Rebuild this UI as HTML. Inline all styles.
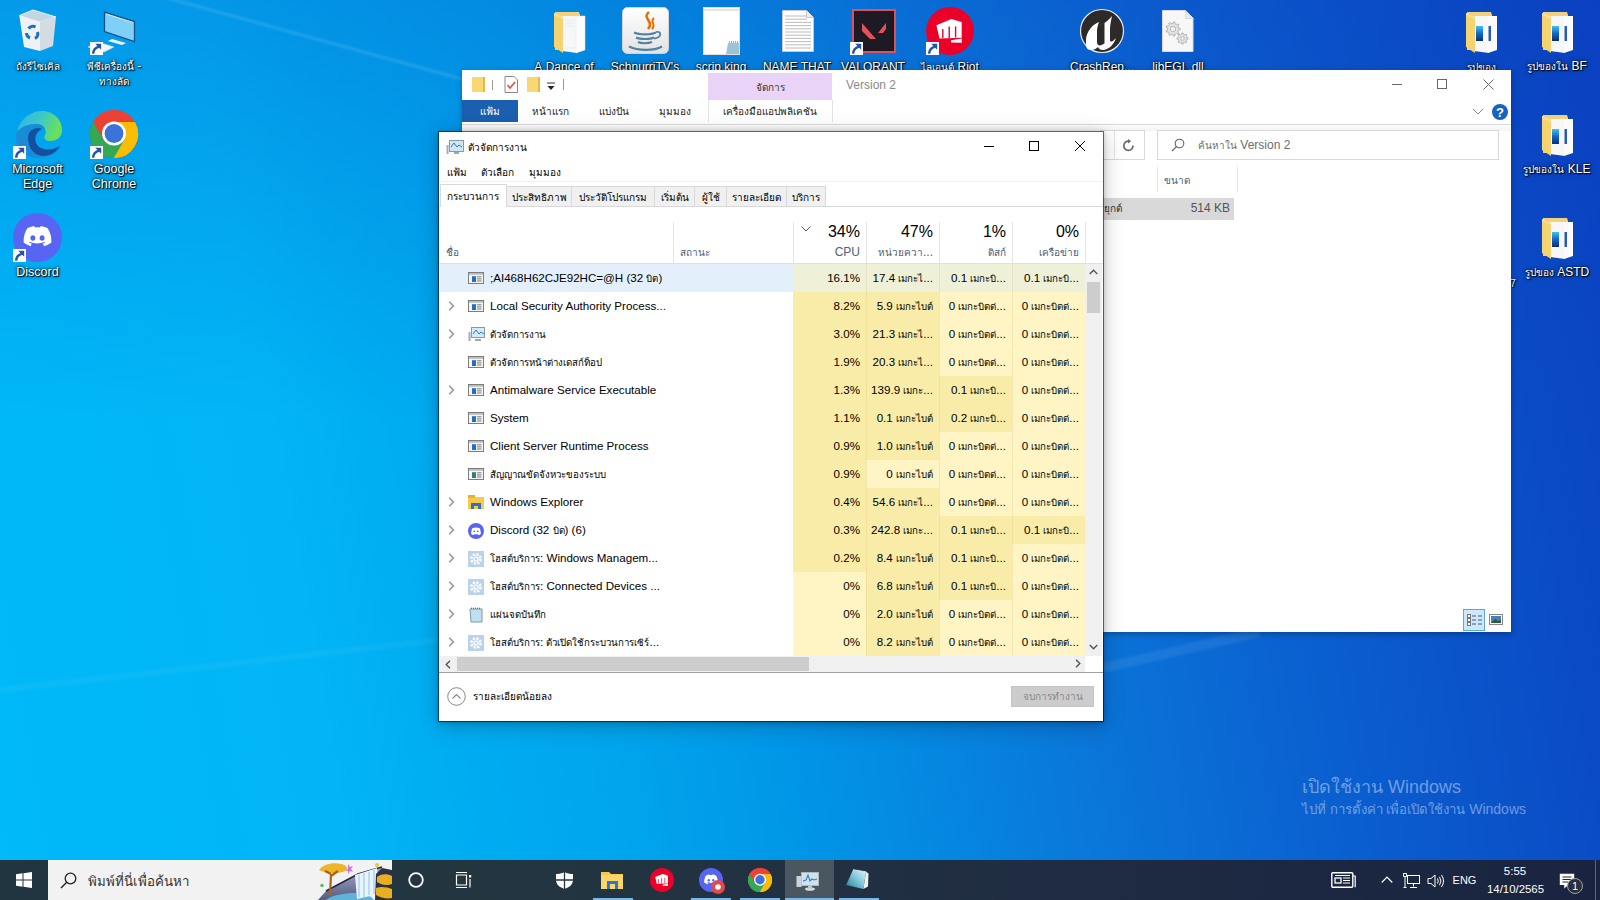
<!DOCTYPE html>
<html><head><meta charset="utf-8">
<style>
*{box-sizing:border-box;margin:0;padding:0}
html,body{width:1600px;height:900px;overflow:hidden}
body{position:relative;font-family:"Liberation Sans",sans-serif;font-size:12px;color:#000;background:#0a78dc}
.a{position:absolute;white-space:nowrap}
.t{font-size:0.833em}
svg.a{overflow:visible}
</style></head><body>
<div class="a" style="left:0px;top:0px;width:1600px;height:900px;background:linear-gradient(80deg,#00bafa 0%,#00b8f8 4%,#02b5f6 20%,#00aef2 26%,#00a4ed 37%,#0098e8 45%,#0a76d9 63.5%,#0a5ecf 78%,#0a4bc5 92%,#0a42c2 100%)"></div>
<div class="a" style="left:0px;top:0px;width:1600px;height:900px;background:linear-gradient(180deg,rgba(10,60,190,.24) 0px,rgba(10,60,190,.12) 200px,rgba(10,60,190,0) 420px)"></div>
<svg class="a" style="left:0px;top:0px;" width="1600" height="900" viewBox="0 0 1600 900"><defs><filter id="bl"><feGaussianBlur stdDeviation="1.2"/></filter></defs><path d="M160 -4L480 84" stroke="rgba(255,255,255,.12)" stroke-width="3" filter="url(#bl)"/><path d="M0 690L440 640" stroke="rgba(255,255,255,.045)" stroke-width="6" filter="url(#bl)"/><path d="M1103 668L1260 632" stroke="rgba(255,255,255,.07)" stroke-width="10" filter="url(#bl)"/></svg>
<svg class="a" style="left:14px;top:6px;" width="48" height="48" viewBox="0 0 48 48"><path d="M5.3 9.6L19 4l23 7-16 5z" fill="#c3d6e2" stroke="#eaf6fd" stroke-width="1"/><path d="M5.3 9.6L26 16v29l-16-4z" fill="#eef2f5"/><path d="M26 16l16-5-3 29-13 5z" fill="#d3dce3"/><path d="M14.5 22.5a5.5 5.5 0 0 1 7-1.5M23.5 26a5.5 5.5 0 0 1-2.5 6.5M16 32a5.5 5.5 0 0 1-3.5-5" fill="none" stroke="#1e6fc0" stroke-width="3"/></svg>
<div class="a" style="left:-22.5px;width:120px;text-align:center;top:57.0px;height:19px;line-height:19px;font-size:12px;color:#fff;text-shadow:0 0 2px rgba(0,0,0,.9),1px 1px 1px #000,0 0 4px rgba(0,0,0,.6)"><span class="t">ถังรีไซเคิล</span></div>
<svg class="a" style="left:86px;top:6px;" width="56" height="56" viewBox="0 0 56 56"><path d="M18.5 6.2L48.5 15.6v20L18.5 25.6z" fill="#7fd0f6" stroke="#1c4f86" stroke-width="1.3"/><path d="M20 8l27 8.5" stroke="#d8f2ff" stroke-width=".8"/><path d="M26 33l14 4-4 2-14-4z" fill="#eef2f5"/><path d="M12 36l16 5-10 5-16-5z" fill="#f2f4f6" stroke="#d8dde2" stroke-width=".5"/></svg>
<svg class="a" style="left:90px;top:42px;" width="13" height="13" viewBox="0 0 13 13"><rect x="0" y="0" width="13" height="13" fill="#fff"/><path d="M5.2 1.8h6v6z" fill="#2455a4"/><path d="M3.2 11.8c0-4 1.8-6 5.8-7.2" stroke="#2455a4" stroke-width="2.4" fill="none"/></svg>
<div class="a" style="left:54.0px;width:120px;text-align:center;top:57.0px;height:19px;line-height:19px;font-size:12px;color:#fff;text-shadow:0 0 2px rgba(0,0,0,.9),1px 1px 1px #000,0 0 4px rgba(0,0,0,.6)"><span class="t">พีซีเครื่องนี้</span> -</div>
<div class="a" style="left:54.0px;width:120px;text-align:center;top:72.0px;height:19px;line-height:19px;font-size:12px;color:#fff;text-shadow:0 0 2px rgba(0,0,0,.9),1px 1px 1px #000,0 0 4px rgba(0,0,0,.6)"><span class="t">ทางลัด</span></div>
<svg class="a" style="left:14px;top:110px;" width="48" height="48" viewBox="0 0 48 48"><defs><linearGradient id="eg1" x1="0" y1="0" x2="1" y2=".3"><stop offset="0" stop-color="#2fb4e8"/><stop offset=".55" stop-color="#3cc8c8"/><stop offset="1" stop-color="#6ae05a"/></linearGradient></defs><path d="M3 22C6 8 18 1 28 1c12 0 20 9 20 19 0 7-5 11-12 11-5 0-7-3-5-6 2-4-1-11-9-11C13 14 6 18 3 22z" fill="url(#eg1)"/><path d="M3 22c3-4 10-8 19-8 6 0 9 3 9 6-7-5-17 0-17 8 0 10 12 18 22 16 4-1 8-4 11-8-4 8-13 12-22 12C11 48 2 38 2 28c0-2 0-4 1-6z" fill="#1b8bd8"/><path d="M14 28c0-8 8-12 14-9-6 3-8 9-6 14 3 7 14 9 24 3-3 6-10 10-17 10-9 0-15-9-15-18z" fill="#14509e"/></svg>
<svg class="a" style="left:13px;top:146px;" width="13" height="13" viewBox="0 0 13 13"><rect x="0" y="0" width="13" height="13" fill="#fff"/><path d="M5.2 1.8h6v6z" fill="#2455a4"/><path d="M3.2 11.8c0-4 1.8-6 5.8-7.2" stroke="#2455a4" stroke-width="2.4" fill="none"/></svg>
<div class="a" style="left:-22.5px;width:120px;text-align:center;top:159.0px;height:20px;line-height:20px;font-size:12.5px;color:#fff;text-shadow:0 0 2px rgba(0,0,0,.9),1px 1px 1px #000,0 0 4px rgba(0,0,0,.6)">Microsoft</div>
<div class="a" style="left:-22.5px;width:120px;text-align:center;top:174.0px;height:20px;line-height:20px;font-size:12.5px;color:#fff;text-shadow:0 0 2px rgba(0,0,0,.9),1px 1px 1px #000,0 0 4px rgba(0,0,0,.6)">Edge</div>
<svg class="a" style="left:90px;top:110px;" width="48" height="48" viewBox="0 0 48 48"><g transform="scale(1.0)"><circle cx="24" cy="24" r="24" fill="#db4437"/>
<path d="M24 24L3.2 36A24 24 0 0 0 24 48z" fill="#0f9d58"/><path d="M24 24L3.2 36A24 24 0 0 1 3.2 12L13.6 30z" fill="#0f9d58"/>
<path d="M24 24H44.8A24 24 0 0 1 24 48z" fill="#ffcd40"/><path d="M24 24L44.8 12A24 24 0 0 1 44.8 36 24 24 0 0 1 24 48z" fill="#fbbc05"/>
<path d="M24 12h20.8A24 24 0 0 0 3.2 12L13.6 30A12 12 0 0 1 24 12z" fill="#ea4335"/>
<path d="M13.6 30L3.2 12A24 24 0 0 0 24 48L34.4 30z" fill="#34a853"/>
<path d="M34.4 30L24 48A24 24 0 0 0 44.8 12H24A12 12 0 0 1 34.4 30z" fill="#fbbc05"/>
<circle cx="24" cy="23.5" r="12" fill="#fff"/><circle cx="24" cy="23.5" r="9.4" fill="#3b73db"/></g></svg>
<svg class="a" style="left:90px;top:146px;" width="13" height="13" viewBox="0 0 13 13"><rect x="0" y="0" width="13" height="13" fill="#fff"/><path d="M5.2 1.8h6v6z" fill="#2455a4"/><path d="M3.2 11.8c0-4 1.8-6 5.8-7.2" stroke="#2455a4" stroke-width="2.4" fill="none"/></svg>
<div class="a" style="left:54.0px;width:120px;text-align:center;top:159.0px;height:20px;line-height:20px;font-size:12.5px;color:#fff;text-shadow:0 0 2px rgba(0,0,0,.9),1px 1px 1px #000,0 0 4px rgba(0,0,0,.6)">Google</div>
<div class="a" style="left:54.0px;width:120px;text-align:center;top:174.0px;height:20px;line-height:20px;font-size:12.5px;color:#fff;text-shadow:0 0 2px rgba(0,0,0,.9),1px 1px 1px #000,0 0 4px rgba(0,0,0,.6)">Chrome</div>
<svg class="a" style="left:13px;top:213px;" width="49" height="49" viewBox="0 0 49 49"><g transform="scale(1.0208333333333333)"><circle cx="24" cy="24" r="24" fill="#5865f2"/>
<path d="M14 15c3-1.5 5.5-2 7-2l.6 1.2c1.6-.3 3.2-.3 4.8 0L27 13c1.5 0 4 .5 7 2 2.5 4 3.8 8.5 3.6 14-2.4 1.8-4.8 2.9-7 3.5l-1.5-2.5c1-.4 1.8-.8 2.6-1.3l-.6-.5c-4.8 2.2-10 2.2-14.8 0l-.6.5c.8.5 1.6.9 2.6 1.3L17.4 32.5c-2.2-.6-4.6-1.7-7-3.5-.2-5.5 1.1-10 3.6-14z" fill="#fff"/>
<ellipse cx="19.5" cy="24.5" rx="2.4" ry="2.7" fill="#5865f2"/><ellipse cx="28.5" cy="24.5" rx="2.4" ry="2.7" fill="#5865f2"/></g></svg>
<svg class="a" style="left:13px;top:249px;" width="13" height="13" viewBox="0 0 13 13"><rect x="0" y="0" width="13" height="13" fill="#fff"/><path d="M5.2 1.8h6v6z" fill="#2455a4"/><path d="M3.2 11.8c0-4 1.8-6 5.8-7.2" stroke="#2455a4" stroke-width="2.4" fill="none"/></svg>
<div class="a" style="left:-22.5px;width:120px;text-align:center;top:262.0px;height:20px;line-height:20px;font-size:12.5px;color:#fff;text-shadow:0 0 2px rgba(0,0,0,.9),1px 1px 1px #000,0 0 4px rgba(0,0,0,.6)">Discord</div>
<svg class="a" style="left:554px;top:12px;" width="32" height="41" viewBox="0 0 32 41"><path d="M1 0h24l1 3v35H1z" fill="#f1d27a"/><path d="M8 4h15v37l-15-2z" fill="#f6f7f8"/><path d="M22 4h9v34l-9 3z" fill="#fbfcfc" stroke="#e2e6ea" stroke-width=".5"/><path d="M11 8h9M11 11h9M11 14h9M11 36h9" stroke="#e4e6ea" stroke-width=".6"/><path d="M0 1l9 4v36l-9-6z" fill="#f5d36e"/><path d="M0 1l9 4v2L0 3z" fill="#f8e09a"/></svg>
<div class="a" style="left:509.0px;width:120px;text-align:center;top:57.5px;height:19px;line-height:19px;font-size:12px;color:#fff;text-shadow:0 0 2px rgba(0,0,0,.9),1px 1px 1px #000,0 0 4px rgba(0,0,0,.6)">A.Dance.of...</div>
<svg class="a" style="left:622px;top:7px;" width="47" height="47" viewBox="0 0 47 47"><defs><linearGradient id="jv" x1="0" y1="0" x2="0" y2="1"><stop offset="0" stop-color="#ffffff"/><stop offset="1" stop-color="#e2e2e2"/></linearGradient></defs><rect x=".5" y=".5" width="46" height="46" rx="5" fill="url(#jv)" stroke="#d4d4d4"/><path d="M27 5c-8 6 6 9-1 17" stroke="#e76f00" stroke-width="2.6" fill="none"/><path d="M32 11c-5 4 3 6-2 11" stroke="#e76f00" stroke-width="1.9" fill="none"/><path d="M12 25.5c5 2.5 17 2.5 22 0" stroke="#5382a1" stroke-width="2.3" fill="none"/><path d="M14 30.5c4 2 14 2 18 0" stroke="#5382a1" stroke-width="2.2" fill="none"/><path d="M16 35c3 1.5 10 1.5 14 0" stroke="#5382a1" stroke-width="2" fill="none"/><path d="M34 25c6-1.5 6 5.5-2 6.5" stroke="#5382a1" stroke-width="1.8" fill="none"/><path d="M7 39.5c9 4.5 25 4.5 33 0" stroke="#5382a1" stroke-width="2.3" fill="none"/></svg>
<div class="a" style="left:585.0px;width:120px;text-align:center;top:57.5px;height:19px;line-height:19px;font-size:12px;color:#fff;text-shadow:0 0 2px rgba(0,0,0,.9),1px 1px 1px #000,0 0 4px rgba(0,0,0,.6)">SchnurriTV's</div>
<svg class="a" style="left:703px;top:7px;" width="38" height="48" viewBox="0 0 38 48"><rect x=".5" y=".5" width="36" height="47" fill="#fff" stroke="#e0e0e0"/><path d="M1 3h35" stroke="#ccc"/><path d="M25 36h11v11H23z" fill="#9cc4d8"/><path d="M26 35h10" stroke="#555" stroke-dasharray="1 1"/></svg>
<div class="a" style="left:661.0px;width:120px;text-align:center;top:57.5px;height:19px;line-height:19px;font-size:12px;color:#fff;text-shadow:0 0 2px rgba(0,0,0,.9),1px 1px 1px #000,0 0 4px rgba(0,0,0,.6)">scrip king</div>
<svg class="a" style="left:782px;top:10px;" width="32" height="42" viewBox="0 0 32 42"><path d="M.5 .5h24l7 7v34H.5z" fill="#fff" stroke="#c8c8c8"/><path d="M24.5 .5v7h7" fill="#eee" stroke="#c8c8c8"/><path d="M3 6.0h22" stroke="#aaa" stroke-width=".8"/><path d="M3 9.2h22" stroke="#aaa" stroke-width=".8"/><path d="M3 12.4h26" stroke="#aaa" stroke-width=".8"/><path d="M3 15.600000000000001h26" stroke="#aaa" stroke-width=".8"/><path d="M3 18.8h26" stroke="#aaa" stroke-width=".8"/><path d="M3 22.0h26" stroke="#aaa" stroke-width=".8"/><path d="M3 25.200000000000003h26" stroke="#aaa" stroke-width=".8"/><path d="M3 28.400000000000002h26" stroke="#aaa" stroke-width=".8"/><path d="M3 31.6h26" stroke="#aaa" stroke-width=".8"/><path d="M3 34.8h26" stroke="#aaa" stroke-width=".8"/><path d="M3 38.0h26" stroke="#aaa" stroke-width=".8"/></svg>
<div class="a" style="left:737.0px;width:120px;text-align:center;top:57.5px;height:19px;line-height:19px;font-size:12px;color:#fff;text-shadow:0 0 2px rgba(0,0,0,.9),1px 1px 1px #000,0 0 4px rgba(0,0,0,.6)">NAME THAT</div>
<svg class="a" style="left:852px;top:9px;" width="44" height="44" viewBox="0 0 44 44"><rect x="1" y="1" width="42" height="42" fill="#1d1a24" stroke="#d9535d" stroke-width="2"/><path d="M10 14l14 16h-6L10 22z" fill="#e5505d"/><path d="M34 14l-8 10h5l3-4z" fill="#e5505d"/></svg>
<svg class="a" style="left:850px;top:42px;" width="13" height="13" viewBox="0 0 13 13"><rect x="0" y="0" width="13" height="13" fill="#fff"/><path d="M5.2 1.8h6v6z" fill="#2455a4"/><path d="M3.2 11.8c0-4 1.8-6 5.8-7.2" stroke="#2455a4" stroke-width="2.4" fill="none"/></svg>
<div class="a" style="left:813.0px;width:120px;text-align:center;top:57.5px;height:19px;line-height:19px;font-size:12px;color:#fff;text-shadow:0 0 2px rgba(0,0,0,.9),1px 1px 1px #000,0 0 4px rgba(0,0,0,.6)">VALORANT</div>
<svg class="a" style="left:926px;top:7px;" width="48" height="48" viewBox="0 0 48 48"><circle cx="24" cy="24" r="24" fill="#eb0029"/><path d="M10.4 18.2L25.4 12 35.7 15V30.8L13.5 31.4z" fill="#fff"/><path d="M16.8 22v9M23.2 19.5v11.5M29.6 19.5v11" stroke="#eb0029" stroke-width="1.4"/><path d="M25 33.3L35.7 31.6v4.2L25 35.5z" fill="#fff"/></svg>
<svg class="a" style="left:926px;top:42px;" width="13" height="13" viewBox="0 0 13 13"><rect x="0" y="0" width="13" height="13" fill="#fff"/><path d="M5.2 1.8h6v6z" fill="#2455a4"/><path d="M3.2 11.8c0-4 1.8-6 5.8-7.2" stroke="#2455a4" stroke-width="2.4" fill="none"/></svg>
<div class="a" style="left:890.0px;width:120px;text-align:center;top:57.5px;height:19px;line-height:19px;font-size:12px;color:#fff;text-shadow:0 0 2px rgba(0,0,0,.9),1px 1px 1px #000,0 0 4px rgba(0,0,0,.6)"><span class="t">ไลเอนต์</span> Riot</div>
<svg class="a" style="left:1080px;top:9px;" width="44" height="44" viewBox="0 0 44 44"><circle cx="22" cy="22" r="21.5" fill="#2d2a28" stroke="#e6eef8" stroke-width="1.2"/><path d="M6 30c1-8 6-14 13-17-1 3-2 6-2 9v11c0 3 2 4 4 3V16c4-2 8-5 11-9-1 5-2 9-2 13v11c0 2 2 2 4 0l2-2c-2 7-8 12-13 12-3 0-4-1-5-3-2 2-4 3-7 3-4 0-5-3-5-6z" fill="#fff"/><path d="M20.5 16l4-2.5v21l-4 2z" fill="#2d2a28"/></svg>
<div class="a" style="left:1042.0px;width:120px;text-align:center;top:57.5px;height:19px;line-height:19px;font-size:12px;color:#fff;text-shadow:0 0 2px rgba(0,0,0,.9),1px 1px 1px #000,0 0 4px rgba(0,0,0,.6)">CrashRep...</div>
<svg class="a" style="left:1162px;top:10px;" width="32" height="42" viewBox="0 0 32 42"><path d="M.5 .5h23l7.5 7.5v33.5H.5z" fill="#f7f7f7" stroke="#dadada"/><path d="M23.5 .5v8h8" fill="#e8e8e8" stroke="#dadada"/><path d="M16.51 18.03 L18.16 18.25 L18.16 19.75 L16.51 19.97 L15.85 21.80 L16.97 23.03 L16.00 24.18 L14.60 23.29 L12.92 24.26 L12.98 25.92 L11.50 26.18 L11.00 24.60 L9.08 24.26 L8.07 25.58 L6.77 24.82 L7.40 23.29 L6.15 21.80 L4.53 22.16 L4.01 20.74 L5.49 19.97 L5.49 18.03 L4.01 17.26 L4.53 15.84 L6.15 16.20 L7.40 14.71 L6.77 13.18 L8.07 12.42 L9.08 13.74 L11.00 13.40 L11.50 11.82 L12.98 12.08 L12.92 13.74 L14.60 14.71 L16.00 13.82 L16.97 14.97 L15.85 16.20Z M13.60 19.00 A2.6 2.6 0 1 0 8.40 19.00 A2.6 2.6 0 1 0 13.60 19.00Z" fill="#e4e4e4" stroke="#a8a8a8" stroke-width=".8" fill-rule="evenodd"/><path d="M24.72 27.66 L26.06 27.84 L26.06 29.16 L24.72 29.34 L24.08 30.89 L24.90 31.97 L23.97 32.90 L22.89 32.08 L21.34 32.72 L21.16 34.06 L19.84 34.06 L19.66 32.72 L18.11 32.08 L17.03 32.90 L16.10 31.97 L16.92 30.89 L16.28 29.34 L14.94 29.16 L14.94 27.84 L16.28 27.66 L16.92 26.11 L16.10 25.03 L17.03 24.10 L18.11 24.92 L19.66 24.28 L19.84 22.94 L21.16 22.94 L21.34 24.28 L22.89 24.92 L23.97 24.10 L24.90 25.03 L24.08 26.11Z M22.30 28.50 A1.8 1.8 0 1 0 18.70 28.50 A1.8 1.8 0 1 0 22.30 28.50Z" fill="#e4e4e4" stroke="#a8a8a8" stroke-width=".8" fill-rule="evenodd"/></svg>
<div class="a" style="left:1118.0px;width:120px;text-align:center;top:57.5px;height:19px;line-height:19px;font-size:12px;color:#fff;text-shadow:0 0 2px rgba(0,0,0,.9),1px 1px 1px #000,0 0 4px rgba(0,0,0,.6)">libEGL.dll</div>
<svg class="a" style="left:1466px;top:12px;" width="32" height="41" viewBox="0 0 32 41"><defs><linearGradient id="ph" x1="0" y1="0" x2="0" y2="1"><stop offset="0" stop-color="#43c0f2"/><stop offset=".5" stop-color="#1167c9"/><stop offset="1" stop-color="#0b2f7a"/></linearGradient></defs><path d="M1 0h24l1 3v35H1z" fill="#f1d27a"/><path d="M8 4h15v37l-15-2z" fill="#f7f7f8"/><path d="M22 4h9v34l-9 3z" fill="#fbfbfc"/><rect x="10" y="14" width="7" height="15" fill="url(#ph)"/><rect x="22.5" y="14" width="2.5" height="15" fill="#2a5ab0"/><path d="M0 1l9 4v36l-9-6z" fill="#f5d36e"/><path d="M0 1l9 4v2L0 3z" fill="#f8e09a"/></svg>
<div class="a" style="left:1421.0px;width:120px;text-align:center;top:57.5px;height:19px;line-height:19px;font-size:12px;color:#fff;text-shadow:0 0 2px rgba(0,0,0,.9),1px 1px 1px #000,0 0 4px rgba(0,0,0,.6)"><span class="t">รูปของ</span></div>
<svg class="a" style="left:1542px;top:12px;" width="32" height="41" viewBox="0 0 32 41"><defs><linearGradient id="ph" x1="0" y1="0" x2="0" y2="1"><stop offset="0" stop-color="#43c0f2"/><stop offset=".5" stop-color="#1167c9"/><stop offset="1" stop-color="#0b2f7a"/></linearGradient></defs><path d="M1 0h24l1 3v35H1z" fill="#f1d27a"/><path d="M8 4h15v37l-15-2z" fill="#f7f7f8"/><path d="M22 4h9v34l-9 3z" fill="#fbfbfc"/><rect x="10" y="14" width="7" height="15" fill="url(#ph)"/><rect x="22.5" y="14" width="2.5" height="15" fill="#2a5ab0"/><path d="M0 1l9 4v36l-9-6z" fill="#f5d36e"/><path d="M0 1l9 4v2L0 3z" fill="#f8e09a"/></svg>
<div class="a" style="left:1497.0px;width:120px;text-align:center;top:56.5px;height:19px;line-height:19px;font-size:12px;color:#fff;text-shadow:0 0 2px rgba(0,0,0,.9),1px 1px 1px #000,0 0 4px rgba(0,0,0,.6)"><span class="t">รูปของใน</span> BF</div>
<svg class="a" style="left:1542px;top:115px;" width="32" height="41" viewBox="0 0 32 41"><defs><linearGradient id="ph" x1="0" y1="0" x2="0" y2="1"><stop offset="0" stop-color="#43c0f2"/><stop offset=".5" stop-color="#1167c9"/><stop offset="1" stop-color="#0b2f7a"/></linearGradient></defs><path d="M1 0h24l1 3v35H1z" fill="#f1d27a"/><path d="M8 4h15v37l-15-2z" fill="#f7f7f8"/><path d="M22 4h9v34l-9 3z" fill="#fbfbfc"/><rect x="10" y="14" width="7" height="15" fill="url(#ph)"/><rect x="22.5" y="14" width="2.5" height="15" fill="#2a5ab0"/><path d="M0 1l9 4v36l-9-6z" fill="#f5d36e"/><path d="M0 1l9 4v2L0 3z" fill="#f8e09a"/></svg>
<div class="a" style="left:1497.0px;width:120px;text-align:center;top:159.5px;height:19px;line-height:19px;font-size:12px;color:#fff;text-shadow:0 0 2px rgba(0,0,0,.9),1px 1px 1px #000,0 0 4px rgba(0,0,0,.6)"><span class="t">รูปของใน</span> KLE</div>
<svg class="a" style="left:1542px;top:218px;" width="32" height="41" viewBox="0 0 32 41"><defs><linearGradient id="ph" x1="0" y1="0" x2="0" y2="1"><stop offset="0" stop-color="#43c0f2"/><stop offset=".5" stop-color="#1167c9"/><stop offset="1" stop-color="#0b2f7a"/></linearGradient></defs><path d="M1 0h24l1 3v35H1z" fill="#f1d27a"/><path d="M8 4h15v37l-15-2z" fill="#f7f7f8"/><path d="M22 4h9v34l-9 3z" fill="#fbfbfc"/><rect x="10" y="14" width="7" height="15" fill="url(#ph)"/><rect x="22.5" y="14" width="2.5" height="15" fill="#2a5ab0"/><path d="M0 1l9 4v36l-9-6z" fill="#f5d36e"/><path d="M0 1l9 4v2L0 3z" fill="#f8e09a"/></svg>
<div class="a" style="left:1497.0px;width:120px;text-align:center;top:262.5px;height:19px;line-height:19px;font-size:12px;color:#fff;text-shadow:0 0 2px rgba(0,0,0,.9),1px 1px 1px #000,0 0 4px rgba(0,0,0,.6)"><span class="t">รูปของ</span> ASTD</div>
<div class="a" style="left:1503.5px;top:276.0px;height:16px;line-height:16px;font-size:10px;color:#fff;text-shadow:0 0 2px rgba(0,0,0,.9),1px 1px 1px #000">Y7</div>
<div class="a" style="left:462px;top:70px;width:1049px;height:562px;background:#fff;box-shadow:0 2px 6px rgba(0,0,0,.3)"></div>
<div class="a" style="left:472px;top:77px;width:13px;height:15px;background:#f8d775;border-right:2px solid #e4b94a"></div>
<div class="a" style="left:492px;top:80px;width:1px;height:10px;background:#999"></div>
<svg class="a" style="left:504px;top:76px;" width="14" height="17" viewBox="0 0 14 17"><path d="M1 .5h9l3.5 3.5v12.5h-12.5z" fill="#fff" stroke="#888"/><path d="M3.5 9l2.5 3 5-6" fill="none" stroke="#e04b3b" stroke-width="1.5"/></svg>
<div class="a" style="left:527px;top:77px;width:13px;height:15px;background:#f8d775;border-right:2px solid #e4b94a"></div>
<svg class="a" style="left:546px;top:82px;" width="10" height="8" viewBox="0 0 10 8"><path d="M1 1h8" stroke="#333"/><path d="M1.5 4h7l-3.5 4z" fill="#222"/></svg>
<div class="a" style="left:563px;top:79px;width:1px;height:11px;background:#999"></div>
<div class="a" style="left:708px;top:73px;width:124px;height:27px;background:#e9d3f7"></div>
<div class="a" style="left:710.0px;width:120px;text-align:center;top:77.5px;height:19px;line-height:19px;font-size:12px;color:#333;"><span class="t">จัดการ</span></div>
<div class="a" style="left:708px;top:100px;width:1px;height:22px;background:#e3e3e3"></div>
<div class="a" style="left:832px;top:100px;width:1px;height:22px;background:#e3e3e3"></div>
<div class="a" style="left:846px;top:75.5px;height:19px;line-height:19px;font-size:12px;color:#8a8a8a;">Version 2</div>
<div class="a" style="left:1392px;top:84px;width:10px;height:1px;background:#666"></div>
<div class="a" style="left:1437px;top:79px;width:10px;height:10px;border:1px solid #666"></div>
<svg class="a" style="left:1483px;top:79px;" width="11" height="11" viewBox="0 0 11 11"><path d="M.5 .5l10 10M10.5 .5l-10 10" stroke="#666" stroke-width="1"/></svg>
<div class="a" style="left:462px;top:100px;width:56px;height:22px;background:#1a5fb0"></div>
<div class="a" style="left:462.0px;width:56px;text-align:center;top:102.0px;height:19px;line-height:19px;font-size:12px;color:#fff;"><span class="t">แฟ้ม</span></div>
<div class="a" style="left:510.0px;width:80px;text-align:center;top:102.0px;height:19px;line-height:19px;font-size:12px;color:#222;"><span class="t">หน้าแรก</span></div>
<div class="a" style="left:574.0px;width:80px;text-align:center;top:102.0px;height:19px;line-height:19px;font-size:12px;color:#222;"><span class="t">แบ่งปัน</span></div>
<div class="a" style="left:635.0px;width:80px;text-align:center;top:102.0px;height:19px;line-height:19px;font-size:12px;color:#222;"><span class="t">มุมมอง</span></div>
<div class="a" style="left:708.0px;width:124px;text-align:center;top:102.0px;height:19px;line-height:19px;font-size:12px;color:#222;"><span class="t">เครื่องมือแอปพลิเคชัน</span></div>
<svg class="a" style="left:1472px;top:108px;" width="12" height="7" viewBox="0 0 12 7"><path d="M1 1l5 5 5-5" fill="none" stroke="#888"/></svg>
<svg class="a" style="left:1491px;top:103px;" width="18" height="18" viewBox="0 0 18 18"><circle cx="9" cy="9" r="8" fill="#1565c0"/><text x="9" y="14" font-size="13" font-weight="bold" fill="#fff" text-anchor="middle" font-family="Liberation Sans">?</text></svg>
<div class="a" style="left:462px;top:123px;width:1049px;height:8px;background:linear-gradient(#fff,#f3f3f3)"></div>
<div class="a" style="left:462px;top:124px;width:1049px;height:1px;background:#dadada"></div>
<div class="a" style="left:1100px;top:130px;width:45px;height:30px;border:1px solid #d9d9d9;background:#fff"></div>
<div class="a" style="left:1114px;top:131px;width:1px;height:28px;background:#e3e3e3"></div>
<svg class="a" style="left:1122px;top:139px;" width="14" height="14" viewBox="0 0 14 14"><path d="M11 6.5A4.6 4.6 0 1 1 7 2.2" fill="none" stroke="#666" stroke-width="1.6"/><path d="M6 0l3.2 2.3L6 4.6z" fill="#666"/></svg>
<div class="a" style="left:1157px;top:130px;width:342px;height:30px;border:1px solid #d9d9d9;background:#fff"></div>
<svg class="a" style="left:1171px;top:138px;" width="14" height="14" viewBox="0 0 14 14"><circle cx="8.5" cy="5.5" r="4.3" fill="none" stroke="#666" stroke-width="1.1"/><path d="M5.5 8.5L1 13" stroke="#666" stroke-width="1.1"/></svg>
<div class="a" style="left:1198px;top:135.5px;height:19px;line-height:19px;font-size:12px;color:#6d6d6d;"><span class="t">ค้นหาใน</span> Version 2</div>
<div class="a" style="left:1157px;top:167px;width:1px;height:25px;background:#e5e5e5"></div>
<div class="a" style="left:1237px;top:167px;width:1px;height:25px;background:#e5e5e5"></div>
<div class="a" style="left:1164px;top:170.5px;height:19px;line-height:19px;font-size:12px;color:#4c607a;"><span class="t">ขนาด</span></div>
<div class="a" style="left:1103px;top:198px;width:131px;height:22px;background:#d9d9d9"></div>
<div class="a" style="left:1104px;top:199.0px;height:19px;line-height:19px;font-size:12px;color:#333;"><span class="t">ยุกต์</span></div>
<div class="a" style="left:1150px;width:80px;text-align:right;top:199.0px;height:19px;line-height:19px;font-size:12px;color:#555;">514 KB</div>
<div class="a" style="left:1463px;top:609px;width:22px;height:22px;background:#cce8ff;border:1px solid #5fa8de"></div>
<svg class="a" style="left:1467px;top:614px;" width="15" height="12" viewBox="0 0 15 12"><rect x=".5" y=".5" width="3" height="3" fill="#fff" stroke="#777"/><rect x=".5" y="4.5" width="3" height="3" fill="#fff" stroke="#777"/><rect x=".5" y="8.5" width="3" height="3" fill="#fff" stroke="#777"/><path d="M5 2h4M11 2h4M5 6h4M11 6h4M5 10h4M11 10h4" stroke="#556"/></svg>
<svg class="a" style="left:1489px;top:614px;" width="14" height="11" viewBox="0 0 14 11"><rect x=".5" y=".5" width="13" height="10" fill="#fff" stroke="#888"/><rect x="2" y="2" width="10" height="7" fill="#4a7fb8"/><path d="M2 9l4-4 3 2 3-1v3z" fill="#2f5b3a"/></svg>
<div class="a" style="left:438px;top:131px;width:666px;height:591px;background:#fff;background-clip:padding-box;border:1px solid rgba(0,0,0,.55);box-shadow:0 4px 20px rgba(0,0,0,.22),0 1px 5px rgba(0,0,0,.2)"></div>
<svg class="a" style="left:446px;top:140px;" width="18" height="15" viewBox="0 0 18 15"><rect x="3.5" y=".5" width="14" height="11" fill="#cfe6f3" stroke="#8a9aa5"/><path d="M5 7l3-4 3 4 2-2 3 2" fill="none" stroke="#2b78c7"/><rect x="8" y="12" width="5" height="2" fill="#9aa"/><rect x=".5" y="5" width="2" height="9" fill="#aab"/></svg>
<div class="a" style="left:468px;top:138.0px;height:19px;line-height:19px;font-size:12px;color:#000;"><span class="t">ตัวจัดการงาน</span></div>
<div class="a" style="left:984px;top:146px;width:10px;height:1px;background:#000"></div>
<div class="a" style="left:1029px;top:141px;width:10px;height:10px;border:1px solid #000"></div>
<svg class="a" style="left:1075px;top:141px;" width="10" height="10" viewBox="0 0 10 10"><path d="M0 0l10 10M10 0L0 10" stroke="#000" stroke-width="1"/></svg>
<div class="a" style="left:447px;top:162.5px;height:19px;line-height:19px;font-size:12px;color:#000;"><span class="t">แฟ้ม</span></div>
<div class="a" style="left:481px;top:162.5px;height:19px;line-height:19px;font-size:12px;color:#000;"><span class="t">ตัวเลือก</span></div>
<div class="a" style="left:529px;top:162.5px;height:19px;line-height:19px;font-size:12px;color:#000;"><span class="t">มุมมอง</span></div>
<div class="a" style="left:439px;top:181px;width:664px;height:1px;background:#f0f0f0"></div>
<div class="a" style="left:439px;top:206px;width:664px;height:1px;background:#d9d9d9"></div>
<div class="a" style="left:506px;top:186px;width:66px;height:21px;background:#f0f0f0;border:1px solid #d9d9d9"></div>
<div class="a" style="left:506.5px;width:65px;text-align:center;top:187.5px;height:19px;line-height:19px;font-size:12px;color:#000;"><span class="t">ประสิทธิภาพ</span></div>
<div class="a" style="left:571px;top:186px;width:84px;height:21px;background:#f0f0f0;border:1px solid #d9d9d9"></div>
<div class="a" style="left:571.5px;width:83px;text-align:center;top:187.5px;height:19px;line-height:19px;font-size:12px;color:#000;"><span class="t">ประวัติโปรแกรม</span></div>
<div class="a" style="left:654px;top:186px;width:41px;height:21px;background:#f0f0f0;border:1px solid #d9d9d9"></div>
<div class="a" style="left:654.5px;width:40px;text-align:center;top:187.5px;height:19px;line-height:19px;font-size:12px;color:#000;"><span class="t">เริ่มต้น</span></div>
<div class="a" style="left:694px;top:186px;width:33px;height:21px;background:#f0f0f0;border:1px solid #d9d9d9"></div>
<div class="a" style="left:694.5px;width:32px;text-align:center;top:187.5px;height:19px;line-height:19px;font-size:12px;color:#000;"><span class="t">ผู้ใช้</span></div>
<div class="a" style="left:726px;top:186px;width:61px;height:21px;background:#f0f0f0;border:1px solid #d9d9d9"></div>
<div class="a" style="left:726.5px;width:60px;text-align:center;top:187.5px;height:19px;line-height:19px;font-size:12px;color:#000;"><span class="t">รายละเอียด</span></div>
<div class="a" style="left:786px;top:186px;width:40px;height:21px;background:#f0f0f0;border:1px solid #d9d9d9"></div>
<div class="a" style="left:786.5px;width:39px;text-align:center;top:187.5px;height:19px;line-height:19px;font-size:12px;color:#000;"><span class="t">บริการ</span></div>
<div class="a" style="left:440px;top:184px;width:67px;height:23px;background:#fff;border:1px solid #d9d9d9;border-bottom:none"></div>
<div class="a" style="left:440.0px;width:66px;text-align:center;top:186.5px;height:19px;line-height:19px;font-size:12px;color:#000;"><span class="t">กระบวนการ</span></div>
<div class="a" style="left:673px;top:222px;width:1px;height:41px;background:#e5e5e5"></div>
<div class="a" style="left:793px;top:222px;width:1px;height:41px;background:#e5e5e5"></div>
<div class="a" style="left:866px;top:222px;width:1px;height:41px;background:#e5e5e5"></div>
<div class="a" style="left:939px;top:222px;width:1px;height:41px;background:#e5e5e5"></div>
<div class="a" style="left:1012px;top:222px;width:1px;height:41px;background:#e5e5e5"></div>
<div class="a" style="left:1085px;top:222px;width:1px;height:41px;background:#e5e5e5"></div>
<div class="a" style="left:439px;top:263px;width:664px;height:1px;background:#e0e0e0"></div>
<div class="a" style="left:446px;top:242.5px;height:19px;line-height:19px;font-size:12px;color:#4c607a;"><span class="t">ชื่อ</span></div>
<div class="a" style="left:680px;top:242.5px;height:19px;line-height:19px;font-size:12px;color:#4c607a;"><span class="t">สถานะ</span></div>
<svg class="a" style="left:801px;top:226px;" width="10" height="6" viewBox="0 0 10 6"><path d="M.5 .5l4.5 4.5 4.5-4.5" fill="none" stroke="#555"/></svg>
<div class="a" style="left:790px;width:70px;text-align:right;top:219.0px;height:25px;line-height:25px;font-size:16px;color:#000;">34%</div>
<div class="a" style="left:790px;width:70px;text-align:right;top:242.5px;height:19px;line-height:19px;font-size:12px;color:#4c607a;">CPU</div>
<div class="a" style="left:863px;width:70px;text-align:right;top:219.0px;height:25px;line-height:25px;font-size:16px;color:#000;">47%</div>
<div class="a" style="left:863px;width:70px;text-align:right;top:242.5px;height:19px;line-height:19px;font-size:12px;color:#4c607a;"><span class="t">หน่วยควา</span>...</div>
<div class="a" style="left:936px;width:70px;text-align:right;top:219.0px;height:25px;line-height:25px;font-size:16px;color:#000;">1%</div>
<div class="a" style="left:936px;width:70px;text-align:right;top:242.5px;height:19px;line-height:19px;font-size:12px;color:#4c607a;"><span class="t">ดิสก์</span></div>
<div class="a" style="left:1009px;width:70px;text-align:right;top:219.0px;height:25px;line-height:25px;font-size:16px;color:#000;">0%</div>
<div class="a" style="left:1009px;width:70px;text-align:right;top:242.5px;height:19px;line-height:19px;font-size:12px;color:#4c607a;"><span class="t">เครือข่าย</span></div>
<div class="a" style="left:440px;top:264px;width:353px;height:28px;background:#e3f0fb"></div>
<div class="a" style="left:793px;top:264px;width:73px;height:28px;background:#eef0d8"></div>
<div class="a" style="left:866px;top:264px;width:73px;height:28px;background:#eef0d8"></div>
<div class="a" style="left:939px;top:264px;width:73px;height:28px;background:#eef0d8"></div>
<div class="a" style="left:1012px;top:264px;width:73px;height:28px;background:#eef0d8"></div>
<div class="a" style="left:866px;top:264px;width:1px;height:28px;background:rgba(200,180,100,.18)"></div>
<div class="a" style="left:939px;top:264px;width:1px;height:28px;background:rgba(200,180,100,.18)"></div>
<div class="a" style="left:1012px;top:264px;width:1px;height:28px;background:rgba(200,180,100,.18)"></div>
<svg class="a" style="left:468px;top:272px;" width="17" height="13" viewBox="0 0 17 13"><rect x=".5" y=".5" width="15" height="11" fill="#f6f6f6" stroke="#7d7d7d"/><rect x="1" y="1" width="14" height="1.8" fill="#bdbdbd"/><rect x="4" y="4.2" width="4" height="5.8" fill="#1e6fc9"/><path d="M9 4.8h4.5M9 6.9h4.5M9 9h4.5" stroke="#6a6a6a" stroke-width=".9"/></svg>
<div class="a" style="left:490px;top:269.0px;height:18px;line-height:18px;font-size:11.6px;color:#000;">;AI468H62CJE92HC=@H (32 <span class="t">บิต</span>)</div>
<div class="a" style="left:790px;width:70px;text-align:right;top:269.0px;height:18px;line-height:18px;font-size:11.6px;color:#000;">16.1%</div>
<div class="a" style="left:861px;width:72px;text-align:right;top:269.0px;height:18px;line-height:18px;font-size:11.6px;color:#000;">17.4 <span class="t">เมกะไ</span>...</div>
<div class="a" style="left:934px;width:72px;text-align:right;top:269.0px;height:18px;line-height:18px;font-size:11.6px;color:#000;">0.1 <span class="t">เมกะบิ</span>...</div>
<div class="a" style="left:1007px;width:72px;text-align:right;top:269.0px;height:18px;line-height:18px;font-size:11.6px;color:#000;">0.1 <span class="t">เมกะบิ</span>...</div>
<div class="a" style="left:793px;top:292px;width:73px;height:28px;background:#f9eca8"></div>
<div class="a" style="left:866px;top:292px;width:73px;height:28px;background:#f9eca8"></div>
<div class="a" style="left:939px;top:292px;width:73px;height:28px;background:#fff4c4"></div>
<div class="a" style="left:1012px;top:292px;width:73px;height:28px;background:#fff4c4"></div>
<div class="a" style="left:866px;top:292px;width:1px;height:28px;background:rgba(200,180,100,.18)"></div>
<div class="a" style="left:939px;top:292px;width:1px;height:28px;background:rgba(200,180,100,.18)"></div>
<div class="a" style="left:1012px;top:292px;width:1px;height:28px;background:rgba(200,180,100,.18)"></div>
<svg class="a" style="left:448px;top:301px;" width="7" height="10" viewBox="0 0 7 10"><path d="M1.2 .8l4.2 4.2-4.2 4.2" fill="none" stroke="#999" stroke-width="1.6"/></svg>
<svg class="a" style="left:468px;top:300px;" width="17" height="13" viewBox="0 0 17 13"><rect x=".5" y=".5" width="15" height="11" fill="#f6f6f6" stroke="#7d7d7d"/><rect x="1" y="1" width="14" height="1.8" fill="#bdbdbd"/><rect x="4" y="4.2" width="4" height="5.8" fill="#1e6fc9"/><path d="M9 4.8h4.5M9 6.9h4.5M9 9h4.5" stroke="#6a6a6a" stroke-width=".9"/></svg>
<div class="a" style="left:490px;top:297.0px;height:18px;line-height:18px;font-size:11.6px;color:#000;">Local Security Authority Process...</div>
<div class="a" style="left:790px;width:70px;text-align:right;top:297.0px;height:18px;line-height:18px;font-size:11.6px;color:#000;">8.2%</div>
<div class="a" style="left:861px;width:72px;text-align:right;top:297.0px;height:18px;line-height:18px;font-size:11.6px;color:#000;">5.9 <span class="t">เมกะไบต์</span></div>
<div class="a" style="left:934px;width:72px;text-align:right;top:297.0px;height:18px;line-height:18px;font-size:11.6px;color:#000;">0 <span class="t">เมกะบิตต่</span>...</div>
<div class="a" style="left:1007px;width:72px;text-align:right;top:297.0px;height:18px;line-height:18px;font-size:11.6px;color:#000;">0 <span class="t">เมกะบิตต่</span>...</div>
<div class="a" style="left:793px;top:320px;width:73px;height:28px;background:#f9eca8"></div>
<div class="a" style="left:866px;top:320px;width:73px;height:28px;background:#f9eca8"></div>
<div class="a" style="left:939px;top:320px;width:73px;height:28px;background:#fff4c4"></div>
<div class="a" style="left:1012px;top:320px;width:73px;height:28px;background:#fff4c4"></div>
<div class="a" style="left:866px;top:320px;width:1px;height:28px;background:rgba(200,180,100,.18)"></div>
<div class="a" style="left:939px;top:320px;width:1px;height:28px;background:rgba(200,180,100,.18)"></div>
<div class="a" style="left:1012px;top:320px;width:1px;height:28px;background:rgba(200,180,100,.18)"></div>
<svg class="a" style="left:448px;top:329px;" width="7" height="10" viewBox="0 0 7 10"><path d="M1.2 .8l4.2 4.2-4.2 4.2" fill="none" stroke="#999" stroke-width="1.6"/></svg>
<svg class="a" style="left:468px;top:327px;" width="17" height="15" viewBox="0 0 17 15"><rect x="3.5" y=".5" width="13" height="10" fill="#d6eaf5" stroke="#8a9aa5"/><path d="M5 7l3-4 3 4 2-2 3 2" fill="none" stroke="#2b78c7"/><rect x="7" y="12" width="6" height="2" fill="#9aa"/><rect x=".5" y="5" width="2" height="9" fill="#aab"/></svg>
<div class="a" style="left:490px;top:325.0px;height:18px;line-height:18px;font-size:11.6px;color:#000;"><span class="t">ตัวจัดการงาน</span></div>
<div class="a" style="left:790px;width:70px;text-align:right;top:325.0px;height:18px;line-height:18px;font-size:11.6px;color:#000;">3.0%</div>
<div class="a" style="left:861px;width:72px;text-align:right;top:325.0px;height:18px;line-height:18px;font-size:11.6px;color:#000;">21.3 <span class="t">เมกะไ</span>...</div>
<div class="a" style="left:934px;width:72px;text-align:right;top:325.0px;height:18px;line-height:18px;font-size:11.6px;color:#000;">0 <span class="t">เมกะบิตต่</span>...</div>
<div class="a" style="left:1007px;width:72px;text-align:right;top:325.0px;height:18px;line-height:18px;font-size:11.6px;color:#000;">0 <span class="t">เมกะบิตต่</span>...</div>
<div class="a" style="left:793px;top:348px;width:73px;height:28px;background:#f9eca8"></div>
<div class="a" style="left:866px;top:348px;width:73px;height:28px;background:#f9eca8"></div>
<div class="a" style="left:939px;top:348px;width:73px;height:28px;background:#fff4c4"></div>
<div class="a" style="left:1012px;top:348px;width:73px;height:28px;background:#fff4c4"></div>
<div class="a" style="left:866px;top:348px;width:1px;height:28px;background:rgba(200,180,100,.18)"></div>
<div class="a" style="left:939px;top:348px;width:1px;height:28px;background:rgba(200,180,100,.18)"></div>
<div class="a" style="left:1012px;top:348px;width:1px;height:28px;background:rgba(200,180,100,.18)"></div>
<svg class="a" style="left:468px;top:356px;" width="17" height="13" viewBox="0 0 17 13"><rect x=".5" y=".5" width="15" height="11" fill="#f6f6f6" stroke="#7d7d7d"/><rect x="1" y="1" width="14" height="1.8" fill="#bdbdbd"/><rect x="4" y="4.2" width="4" height="5.8" fill="#1e6fc9"/><path d="M9 4.8h4.5M9 6.9h4.5M9 9h4.5" stroke="#6a6a6a" stroke-width=".9"/></svg>
<div class="a" style="left:490px;top:353.0px;height:18px;line-height:18px;font-size:11.6px;color:#000;"><span class="t">ตัวจัดการหน้าต่างเดสก์ท็อป</span></div>
<div class="a" style="left:790px;width:70px;text-align:right;top:353.0px;height:18px;line-height:18px;font-size:11.6px;color:#000;">1.9%</div>
<div class="a" style="left:861px;width:72px;text-align:right;top:353.0px;height:18px;line-height:18px;font-size:11.6px;color:#000;">20.3 <span class="t">เมกะไ</span>...</div>
<div class="a" style="left:934px;width:72px;text-align:right;top:353.0px;height:18px;line-height:18px;font-size:11.6px;color:#000;">0 <span class="t">เมกะบิตต่</span>...</div>
<div class="a" style="left:1007px;width:72px;text-align:right;top:353.0px;height:18px;line-height:18px;font-size:11.6px;color:#000;">0 <span class="t">เมกะบิตต่</span>...</div>
<div class="a" style="left:793px;top:376px;width:73px;height:28px;background:#f9eca8"></div>
<div class="a" style="left:866px;top:376px;width:73px;height:28px;background:#f9eca8"></div>
<div class="a" style="left:939px;top:376px;width:73px;height:28px;background:#f9eca8"></div>
<div class="a" style="left:1012px;top:376px;width:73px;height:28px;background:#fff4c4"></div>
<div class="a" style="left:866px;top:376px;width:1px;height:28px;background:rgba(200,180,100,.18)"></div>
<div class="a" style="left:939px;top:376px;width:1px;height:28px;background:rgba(200,180,100,.18)"></div>
<div class="a" style="left:1012px;top:376px;width:1px;height:28px;background:rgba(200,180,100,.18)"></div>
<svg class="a" style="left:448px;top:385px;" width="7" height="10" viewBox="0 0 7 10"><path d="M1.2 .8l4.2 4.2-4.2 4.2" fill="none" stroke="#999" stroke-width="1.6"/></svg>
<svg class="a" style="left:468px;top:384px;" width="17" height="13" viewBox="0 0 17 13"><rect x=".5" y=".5" width="15" height="11" fill="#f6f6f6" stroke="#7d7d7d"/><rect x="1" y="1" width="14" height="1.8" fill="#bdbdbd"/><rect x="4" y="4.2" width="4" height="5.8" fill="#1e6fc9"/><path d="M9 4.8h4.5M9 6.9h4.5M9 9h4.5" stroke="#6a6a6a" stroke-width=".9"/></svg>
<div class="a" style="left:490px;top:381.0px;height:18px;line-height:18px;font-size:11.6px;color:#000;">Antimalware Service Executable</div>
<div class="a" style="left:790px;width:70px;text-align:right;top:381.0px;height:18px;line-height:18px;font-size:11.6px;color:#000;">1.3%</div>
<div class="a" style="left:861px;width:72px;text-align:right;top:381.0px;height:18px;line-height:18px;font-size:11.6px;color:#000;">139.9 <span class="t">เมกะ</span>...</div>
<div class="a" style="left:934px;width:72px;text-align:right;top:381.0px;height:18px;line-height:18px;font-size:11.6px;color:#000;">0.1 <span class="t">เมกะบิ</span>...</div>
<div class="a" style="left:1007px;width:72px;text-align:right;top:381.0px;height:18px;line-height:18px;font-size:11.6px;color:#000;">0 <span class="t">เมกะบิตต่</span>...</div>
<div class="a" style="left:793px;top:404px;width:73px;height:28px;background:#f9eca8"></div>
<div class="a" style="left:866px;top:404px;width:73px;height:28px;background:#f9eca8"></div>
<div class="a" style="left:939px;top:404px;width:73px;height:28px;background:#f9eca8"></div>
<div class="a" style="left:1012px;top:404px;width:73px;height:28px;background:#fff4c4"></div>
<div class="a" style="left:866px;top:404px;width:1px;height:28px;background:rgba(200,180,100,.18)"></div>
<div class="a" style="left:939px;top:404px;width:1px;height:28px;background:rgba(200,180,100,.18)"></div>
<div class="a" style="left:1012px;top:404px;width:1px;height:28px;background:rgba(200,180,100,.18)"></div>
<svg class="a" style="left:468px;top:412px;" width="17" height="13" viewBox="0 0 17 13"><rect x=".5" y=".5" width="15" height="11" fill="#f6f6f6" stroke="#7d7d7d"/><rect x="1" y="1" width="14" height="1.8" fill="#bdbdbd"/><rect x="4" y="4.2" width="4" height="5.8" fill="#1e6fc9"/><path d="M9 4.8h4.5M9 6.9h4.5M9 9h4.5" stroke="#6a6a6a" stroke-width=".9"/></svg>
<div class="a" style="left:490px;top:409.0px;height:18px;line-height:18px;font-size:11.6px;color:#000;">System</div>
<div class="a" style="left:790px;width:70px;text-align:right;top:409.0px;height:18px;line-height:18px;font-size:11.6px;color:#000;">1.1%</div>
<div class="a" style="left:861px;width:72px;text-align:right;top:409.0px;height:18px;line-height:18px;font-size:11.6px;color:#000;">0.1 <span class="t">เมกะไบต์</span></div>
<div class="a" style="left:934px;width:72px;text-align:right;top:409.0px;height:18px;line-height:18px;font-size:11.6px;color:#000;">0.2 <span class="t">เมกะบิ</span>...</div>
<div class="a" style="left:1007px;width:72px;text-align:right;top:409.0px;height:18px;line-height:18px;font-size:11.6px;color:#000;">0 <span class="t">เมกะบิตต่</span>...</div>
<div class="a" style="left:793px;top:432px;width:73px;height:28px;background:#f9eca8"></div>
<div class="a" style="left:866px;top:432px;width:73px;height:28px;background:#f9eca8"></div>
<div class="a" style="left:939px;top:432px;width:73px;height:28px;background:#fff4c4"></div>
<div class="a" style="left:1012px;top:432px;width:73px;height:28px;background:#fff4c4"></div>
<div class="a" style="left:866px;top:432px;width:1px;height:28px;background:rgba(200,180,100,.18)"></div>
<div class="a" style="left:939px;top:432px;width:1px;height:28px;background:rgba(200,180,100,.18)"></div>
<div class="a" style="left:1012px;top:432px;width:1px;height:28px;background:rgba(200,180,100,.18)"></div>
<svg class="a" style="left:468px;top:440px;" width="17" height="13" viewBox="0 0 17 13"><rect x=".5" y=".5" width="15" height="11" fill="#f6f6f6" stroke="#7d7d7d"/><rect x="1" y="1" width="14" height="1.8" fill="#bdbdbd"/><rect x="4" y="4.2" width="4" height="5.8" fill="#1e6fc9"/><path d="M9 4.8h4.5M9 6.9h4.5M9 9h4.5" stroke="#6a6a6a" stroke-width=".9"/></svg>
<div class="a" style="left:490px;top:437.0px;height:18px;line-height:18px;font-size:11.6px;color:#000;">Client Server Runtime Process</div>
<div class="a" style="left:790px;width:70px;text-align:right;top:437.0px;height:18px;line-height:18px;font-size:11.6px;color:#000;">0.9%</div>
<div class="a" style="left:861px;width:72px;text-align:right;top:437.0px;height:18px;line-height:18px;font-size:11.6px;color:#000;">1.0 <span class="t">เมกะไบต์</span></div>
<div class="a" style="left:934px;width:72px;text-align:right;top:437.0px;height:18px;line-height:18px;font-size:11.6px;color:#000;">0 <span class="t">เมกะบิตต่</span>...</div>
<div class="a" style="left:1007px;width:72px;text-align:right;top:437.0px;height:18px;line-height:18px;font-size:11.6px;color:#000;">0 <span class="t">เมกะบิตต่</span>...</div>
<div class="a" style="left:793px;top:460px;width:73px;height:28px;background:#f9eca8"></div>
<div class="a" style="left:866px;top:460px;width:73px;height:28px;background:#fff4c4"></div>
<div class="a" style="left:939px;top:460px;width:73px;height:28px;background:#fff4c4"></div>
<div class="a" style="left:1012px;top:460px;width:73px;height:28px;background:#fff4c4"></div>
<div class="a" style="left:866px;top:460px;width:1px;height:28px;background:rgba(200,180,100,.18)"></div>
<div class="a" style="left:939px;top:460px;width:1px;height:28px;background:rgba(200,180,100,.18)"></div>
<div class="a" style="left:1012px;top:460px;width:1px;height:28px;background:rgba(200,180,100,.18)"></div>
<svg class="a" style="left:468px;top:468px;" width="17" height="13" viewBox="0 0 17 13"><rect x=".5" y=".5" width="15" height="11" fill="#f6f6f6" stroke="#7d7d7d"/><rect x="1" y="1" width="14" height="1.8" fill="#bdbdbd"/><rect x="4" y="4.2" width="4" height="5.8" fill="#2d7f80"/><path d="M9 4.8h4.5M9 6.9h4.5M9 9h4.5" stroke="#6a6a6a" stroke-width=".9"/></svg>
<div class="a" style="left:490px;top:465.0px;height:18px;line-height:18px;font-size:11.6px;color:#000;"><span class="t">สัญญาณขัดจังหวะของระบบ</span></div>
<div class="a" style="left:790px;width:70px;text-align:right;top:465.0px;height:18px;line-height:18px;font-size:11.6px;color:#000;">0.9%</div>
<div class="a" style="left:861px;width:72px;text-align:right;top:465.0px;height:18px;line-height:18px;font-size:11.6px;color:#000;">0 <span class="t">เมกะไบต์</span></div>
<div class="a" style="left:934px;width:72px;text-align:right;top:465.0px;height:18px;line-height:18px;font-size:11.6px;color:#000;">0 <span class="t">เมกะบิตต่</span>...</div>
<div class="a" style="left:1007px;width:72px;text-align:right;top:465.0px;height:18px;line-height:18px;font-size:11.6px;color:#000;">0 <span class="t">เมกะบิตต่</span>...</div>
<div class="a" style="left:793px;top:488px;width:73px;height:28px;background:#f9eca8"></div>
<div class="a" style="left:866px;top:488px;width:73px;height:28px;background:#f9eca8"></div>
<div class="a" style="left:939px;top:488px;width:73px;height:28px;background:#fff4c4"></div>
<div class="a" style="left:1012px;top:488px;width:73px;height:28px;background:#fff4c4"></div>
<div class="a" style="left:866px;top:488px;width:1px;height:28px;background:rgba(200,180,100,.18)"></div>
<div class="a" style="left:939px;top:488px;width:1px;height:28px;background:rgba(200,180,100,.18)"></div>
<div class="a" style="left:1012px;top:488px;width:1px;height:28px;background:rgba(200,180,100,.18)"></div>
<svg class="a" style="left:448px;top:497px;" width="7" height="10" viewBox="0 0 7 10"><path d="M1.2 .8l4.2 4.2-4.2 4.2" fill="none" stroke="#999" stroke-width="1.6"/></svg>
<svg class="a" style="left:468px;top:495px;" width="16" height="15" viewBox="0 0 16 15"><rect x="0" y="2" width="16" height="12" fill="#f8c94a"/><rect x="0" y="0" width="7" height="3" fill="#e8b030"/><rect x="3" y="8" width="10" height="6" fill="#2a6fc9"/><rect x="6" y="11" width="4" height="3" fill="#f8c94a"/></svg>
<div class="a" style="left:490px;top:493.0px;height:18px;line-height:18px;font-size:11.6px;color:#000;">Windows Explorer</div>
<div class="a" style="left:790px;width:70px;text-align:right;top:493.0px;height:18px;line-height:18px;font-size:11.6px;color:#000;">0.4%</div>
<div class="a" style="left:861px;width:72px;text-align:right;top:493.0px;height:18px;line-height:18px;font-size:11.6px;color:#000;">54.6 <span class="t">เมกะไ</span>...</div>
<div class="a" style="left:934px;width:72px;text-align:right;top:493.0px;height:18px;line-height:18px;font-size:11.6px;color:#000;">0 <span class="t">เมกะบิตต่</span>...</div>
<div class="a" style="left:1007px;width:72px;text-align:right;top:493.0px;height:18px;line-height:18px;font-size:11.6px;color:#000;">0 <span class="t">เมกะบิตต่</span>...</div>
<div class="a" style="left:793px;top:516px;width:73px;height:28px;background:#f9eca8"></div>
<div class="a" style="left:866px;top:516px;width:73px;height:28px;background:#f9eca8"></div>
<div class="a" style="left:939px;top:516px;width:73px;height:28px;background:#f9eca8"></div>
<div class="a" style="left:1012px;top:516px;width:73px;height:28px;background:#f9eca8"></div>
<div class="a" style="left:866px;top:516px;width:1px;height:28px;background:rgba(200,180,100,.18)"></div>
<div class="a" style="left:939px;top:516px;width:1px;height:28px;background:rgba(200,180,100,.18)"></div>
<div class="a" style="left:1012px;top:516px;width:1px;height:28px;background:rgba(200,180,100,.18)"></div>
<svg class="a" style="left:448px;top:525px;" width="7" height="10" viewBox="0 0 7 10"><path d="M1.2 .8l4.2 4.2-4.2 4.2" fill="none" stroke="#999" stroke-width="1.6"/></svg>
<svg class="a" style="left:468px;top:523px;" width="16" height="16" viewBox="0 0 16 16"><circle cx="8" cy="8" r="8" fill="#5865f2"/><path d="M4 5.5q4-2 8 0l1 5q-1 1.5-3 1.5l-.6-1q-1.4.5-2.8 0l-.6 1q-2 0-3-1.5z" fill="#fff"/><circle cx="6.3" cy="8.3" r=".9" fill="#5865f2"/><circle cx="9.7" cy="8.3" r=".9" fill="#5865f2"/></svg>
<div class="a" style="left:490px;top:521.0px;height:18px;line-height:18px;font-size:11.6px;color:#000;">Discord (32 <span class="t">บิต</span>) (6)</div>
<div class="a" style="left:790px;width:70px;text-align:right;top:521.0px;height:18px;line-height:18px;font-size:11.6px;color:#000;">0.3%</div>
<div class="a" style="left:861px;width:72px;text-align:right;top:521.0px;height:18px;line-height:18px;font-size:11.6px;color:#000;">242.8 <span class="t">เมกะ</span>...</div>
<div class="a" style="left:934px;width:72px;text-align:right;top:521.0px;height:18px;line-height:18px;font-size:11.6px;color:#000;">0.1 <span class="t">เมกะบิ</span>...</div>
<div class="a" style="left:1007px;width:72px;text-align:right;top:521.0px;height:18px;line-height:18px;font-size:11.6px;color:#000;">0.1 <span class="t">เมกะบิ</span>...</div>
<div class="a" style="left:793px;top:544px;width:73px;height:28px;background:#f9eca8"></div>
<div class="a" style="left:866px;top:544px;width:73px;height:28px;background:#f9eca8"></div>
<div class="a" style="left:939px;top:544px;width:73px;height:28px;background:#f9eca8"></div>
<div class="a" style="left:1012px;top:544px;width:73px;height:28px;background:#fff4c4"></div>
<div class="a" style="left:866px;top:544px;width:1px;height:28px;background:rgba(200,180,100,.18)"></div>
<div class="a" style="left:939px;top:544px;width:1px;height:28px;background:rgba(200,180,100,.18)"></div>
<div class="a" style="left:1012px;top:544px;width:1px;height:28px;background:rgba(200,180,100,.18)"></div>
<svg class="a" style="left:448px;top:553px;" width="7" height="10" viewBox="0 0 7 10"><path d="M1.2 .8l4.2 4.2-4.2 4.2" fill="none" stroke="#999" stroke-width="1.6"/></svg>
<svg class="a" style="left:468px;top:551px;" width="16" height="16" viewBox="0 0 16 16"><rect x="0" y="0" width="16" height="16" fill="#b9d3ec"/><circle cx="8" cy="8" r="4.5" fill="none" stroke="#fff" stroke-width="2.6" stroke-dasharray="2.2 1.3"/><circle cx="8" cy="8" r="2.6" fill="#fff"/><circle cx="8" cy="8" r="1.3" fill="#b9d3ec"/></svg>
<div class="a" style="left:490px;top:549.0px;height:18px;line-height:18px;font-size:11.6px;color:#000;"><span class="t">โฮสต์บริการ</span>: Windows Managem...</div>
<div class="a" style="left:790px;width:70px;text-align:right;top:549.0px;height:18px;line-height:18px;font-size:11.6px;color:#000;">0.2%</div>
<div class="a" style="left:861px;width:72px;text-align:right;top:549.0px;height:18px;line-height:18px;font-size:11.6px;color:#000;">8.4 <span class="t">เมกะไบต์</span></div>
<div class="a" style="left:934px;width:72px;text-align:right;top:549.0px;height:18px;line-height:18px;font-size:11.6px;color:#000;">0.1 <span class="t">เมกะบิ</span>...</div>
<div class="a" style="left:1007px;width:72px;text-align:right;top:549.0px;height:18px;line-height:18px;font-size:11.6px;color:#000;">0 <span class="t">เมกะบิตต่</span>...</div>
<div class="a" style="left:793px;top:572px;width:73px;height:28px;background:#fff4c4"></div>
<div class="a" style="left:866px;top:572px;width:73px;height:28px;background:#f9eca8"></div>
<div class="a" style="left:939px;top:572px;width:73px;height:28px;background:#f9eca8"></div>
<div class="a" style="left:1012px;top:572px;width:73px;height:28px;background:#fff4c4"></div>
<div class="a" style="left:866px;top:572px;width:1px;height:28px;background:rgba(200,180,100,.18)"></div>
<div class="a" style="left:939px;top:572px;width:1px;height:28px;background:rgba(200,180,100,.18)"></div>
<div class="a" style="left:1012px;top:572px;width:1px;height:28px;background:rgba(200,180,100,.18)"></div>
<svg class="a" style="left:448px;top:581px;" width="7" height="10" viewBox="0 0 7 10"><path d="M1.2 .8l4.2 4.2-4.2 4.2" fill="none" stroke="#999" stroke-width="1.6"/></svg>
<svg class="a" style="left:468px;top:579px;" width="16" height="16" viewBox="0 0 16 16"><rect x="0" y="0" width="16" height="16" fill="#b9d3ec"/><circle cx="8" cy="8" r="4.5" fill="none" stroke="#fff" stroke-width="2.6" stroke-dasharray="2.2 1.3"/><circle cx="8" cy="8" r="2.6" fill="#fff"/><circle cx="8" cy="8" r="1.3" fill="#b9d3ec"/></svg>
<div class="a" style="left:490px;top:577.0px;height:18px;line-height:18px;font-size:11.6px;color:#000;"><span class="t">โฮสต์บริการ</span>: Connected Devices ...</div>
<div class="a" style="left:790px;width:70px;text-align:right;top:577.0px;height:18px;line-height:18px;font-size:11.6px;color:#000;">0%</div>
<div class="a" style="left:861px;width:72px;text-align:right;top:577.0px;height:18px;line-height:18px;font-size:11.6px;color:#000;">6.8 <span class="t">เมกะไบต์</span></div>
<div class="a" style="left:934px;width:72px;text-align:right;top:577.0px;height:18px;line-height:18px;font-size:11.6px;color:#000;">0.1 <span class="t">เมกะบิ</span>...</div>
<div class="a" style="left:1007px;width:72px;text-align:right;top:577.0px;height:18px;line-height:18px;font-size:11.6px;color:#000;">0 <span class="t">เมกะบิตต่</span>...</div>
<div class="a" style="left:793px;top:600px;width:73px;height:28px;background:#fff4c4"></div>
<div class="a" style="left:866px;top:600px;width:73px;height:28px;background:#f9eca8"></div>
<div class="a" style="left:939px;top:600px;width:73px;height:28px;background:#fff4c4"></div>
<div class="a" style="left:1012px;top:600px;width:73px;height:28px;background:#fff4c4"></div>
<div class="a" style="left:866px;top:600px;width:1px;height:28px;background:rgba(200,180,100,.18)"></div>
<div class="a" style="left:939px;top:600px;width:1px;height:28px;background:rgba(200,180,100,.18)"></div>
<div class="a" style="left:1012px;top:600px;width:1px;height:28px;background:rgba(200,180,100,.18)"></div>
<svg class="a" style="left:448px;top:609px;" width="7" height="10" viewBox="0 0 7 10"><path d="M1.2 .8l4.2 4.2-4.2 4.2" fill="none" stroke="#999" stroke-width="1.6"/></svg>
<svg class="a" style="left:468px;top:607px;" width="16" height="16" viewBox="0 0 16 16"><path d="M2 2h12v13H3z" fill="#bfe0ec" stroke="#7c9aa8"/><path d="M3 1.2h10" stroke="#555" stroke-dasharray="1 1"/></svg>
<div class="a" style="left:490px;top:605.0px;height:18px;line-height:18px;font-size:11.6px;color:#000;"><span class="t">แผ่นจดบันทึก</span></div>
<div class="a" style="left:790px;width:70px;text-align:right;top:605.0px;height:18px;line-height:18px;font-size:11.6px;color:#000;">0%</div>
<div class="a" style="left:861px;width:72px;text-align:right;top:605.0px;height:18px;line-height:18px;font-size:11.6px;color:#000;">2.0 <span class="t">เมกะไบต์</span></div>
<div class="a" style="left:934px;width:72px;text-align:right;top:605.0px;height:18px;line-height:18px;font-size:11.6px;color:#000;">0 <span class="t">เมกะบิตต่</span>...</div>
<div class="a" style="left:1007px;width:72px;text-align:right;top:605.0px;height:18px;line-height:18px;font-size:11.6px;color:#000;">0 <span class="t">เมกะบิตต่</span>...</div>
<div class="a" style="left:793px;top:628px;width:73px;height:28px;background:#fff4c4"></div>
<div class="a" style="left:866px;top:628px;width:73px;height:28px;background:#f9eca8"></div>
<div class="a" style="left:939px;top:628px;width:73px;height:28px;background:#fff4c4"></div>
<div class="a" style="left:1012px;top:628px;width:73px;height:28px;background:#fff4c4"></div>
<div class="a" style="left:866px;top:628px;width:1px;height:28px;background:rgba(200,180,100,.18)"></div>
<div class="a" style="left:939px;top:628px;width:1px;height:28px;background:rgba(200,180,100,.18)"></div>
<div class="a" style="left:1012px;top:628px;width:1px;height:28px;background:rgba(200,180,100,.18)"></div>
<svg class="a" style="left:448px;top:637px;" width="7" height="10" viewBox="0 0 7 10"><path d="M1.2 .8l4.2 4.2-4.2 4.2" fill="none" stroke="#999" stroke-width="1.6"/></svg>
<svg class="a" style="left:468px;top:635px;" width="16" height="16" viewBox="0 0 16 16"><rect x="0" y="0" width="16" height="16" fill="#b9d3ec"/><circle cx="8" cy="8" r="4.5" fill="none" stroke="#fff" stroke-width="2.6" stroke-dasharray="2.2 1.3"/><circle cx="8" cy="8" r="2.6" fill="#fff"/><circle cx="8" cy="8" r="1.3" fill="#b9d3ec"/></svg>
<div class="a" style="left:490px;top:633.0px;height:18px;line-height:18px;font-size:11.6px;color:#000;"><span class="t">โฮสต์บริการ</span>: <span class="t">ตัวเปิดใช้กระบวนการเซิร์</span>...</div>
<div class="a" style="left:790px;width:70px;text-align:right;top:633.0px;height:18px;line-height:18px;font-size:11.6px;color:#000;">0%</div>
<div class="a" style="left:861px;width:72px;text-align:right;top:633.0px;height:18px;line-height:18px;font-size:11.6px;color:#000;">8.2 <span class="t">เมกะไบต์</span></div>
<div class="a" style="left:934px;width:72px;text-align:right;top:633.0px;height:18px;line-height:18px;font-size:11.6px;color:#000;">0 <span class="t">เมกะบิตต่</span>...</div>
<div class="a" style="left:1007px;width:72px;text-align:right;top:633.0px;height:18px;line-height:18px;font-size:11.6px;color:#000;">0 <span class="t">เมกะบิตต่</span>...</div>
<div class="a" style="left:1085px;top:264px;width:17px;height:392px;background:#f0f0f0"></div>
<svg class="a" style="left:1089px;top:269px;" width="9" height="6" viewBox="0 0 9 6"><path d="M.7 5L4.5 1.2 8.3 5" fill="none" stroke="#555" stroke-width="1.4"/></svg>
<div class="a" style="left:1087px;top:282px;width:13px;height:31px;background:#cdcdcd"></div>
<svg class="a" style="left:1089px;top:644px;" width="9" height="6" viewBox="0 0 9 6"><path d="M.7 1L4.5 4.8 8.3 1" fill="none" stroke="#555" stroke-width="1.4"/></svg>
<div class="a" style="left:439px;top:656px;width:646px;height:16px;background:#f0f0f0"></div>
<div class="a" style="left:457px;top:657px;width:352px;height:14px;background:#cdcdcd"></div>
<svg class="a" style="left:445px;top:660px;" width="6" height="9" viewBox="0 0 6 9"><path d="M5 .7L1.2 4.5 5 8.3" fill="none" stroke="#555" stroke-width="1.4"/></svg>
<svg class="a" style="left:1075px;top:659px;" width="6" height="9" viewBox="0 0 6 9"><path d="M1 .7l3.8 3.8L1 8.3" fill="none" stroke="#555" stroke-width="1.4"/></svg>
<div class="a" style="left:439px;top:672px;width:664px;height:1px;background:#a0a0a0"></div>
<svg class="a" style="left:447px;top:687px;" width="19" height="19" viewBox="0 0 19 19"><circle cx="9.5" cy="9.5" r="8.8" fill="none" stroke="#888"/><path d="M5.5 11.5l4-4 4 4" fill="none" stroke="#888" stroke-width="1.1"/></svg>
<div class="a" style="left:473px;top:687.0px;height:19px;line-height:19px;font-size:12px;color:#000;"><span class="t">รายละเอียดน้อยลง</span></div>
<div class="a" style="left:1011px;top:686px;width:83px;height:21px;background:#cccccc;border:1px solid #c4c4c4"></div>
<div class="a" style="left:1012.5px;width:80px;text-align:center;top:687.0px;height:19px;line-height:19px;font-size:12px;color:#888;"><span class="t">จบการทำงาน</span></div>
<div class="a" style="left:1302px;top:773px;height:28px;line-height:28px;font-size:18px;color:rgba(255,255,255,.42)"><span style="font-size:1em">เปิดใช้งาน</span> Windows</div>
<div class="a" style="left:1302px;top:798px;height:22px;line-height:22px;font-size:14px;color:rgba(255,255,255,.42)"><span style="font-size:.94em">ไปที่ การตั้งค่า เพื่อเปิดใช้งาน</span> Windows</div>
<div class="a" style="left:0px;top:860px;width:1600px;height:40px;background:linear-gradient(90deg,#213540 0%,#233640 30%,#212f42 55%,#1c2841 80%,#1a2440 100%)"></div>
<svg class="a" style="left:16px;top:872px;" width="16" height="16" viewBox="0 0 16 16"><path d="M0 2.2l6.5-.9v6.2H0zM7.5 1.2L16 0v7.5H7.5zM0 8.5h6.5v6.2L0 13.8zM7.5 8.5H16V16l-8.5-1.2z" fill="#fff"/></svg>
<div class="a" style="left:48px;top:860px;width:344px;height:40px;background:#f2f2f2"></div>
<svg class="a" style="left:60px;top:872px;" width="17" height="17" viewBox="0 0 17 17"><circle cx="10.5" cy="6.5" r="5.3" fill="none" stroke="#222" stroke-width="1.3"/><path d="M6.8 10.2L1 16" stroke="#222" stroke-width="1.4"/></svg>
<div class="a" style="left:88px;top:867.5px;height:25px;line-height:25px;font-size:16px;color:#333;"><span class="t">พิมพ์ที่นี่เพื่อค้นหา</span></div>
<svg class="a" style="left:312px;top:858px;" width="80" height="42" viewBox="0 0 80 42"><defs><linearGradient id="rk" x1="0" y1="0" x2="0" y2="1"><stop offset="0" stop-color="#a4a8d0"/><stop offset="1" stop-color="#565c80"/></linearGradient></defs><path d="M6 42L14 33 46 16 70 9 70 20 60 24 46 34 40 37 14 42z" fill="url(#rk)"/><path d="M14 33L46 16 70 9" fill="none" stroke="#23263a" stroke-width="1.5"/><path d="M14 42c6-5 18-7 30-7 8 0 14 2 18 7z" fill="#5fb2d8"/><path d="M43 17l22-7 2 26-22 5z" fill="#eaf4fc"/><path d="M47 17v22M52 15v24M57 14v23M62 12v24" stroke="#9cc8ee" stroke-width="1.2"/><path d="M7 12c4-6 14-8 22-6 6 1 8 5 4 7-6 3-18 3-26-1z" fill="#f0b428"/><path d="M18 38l1-22M19 16l-6-3M19 18l7-5" stroke="#a8631e" stroke-width="2.2" fill="none"/><path d="M63 42l1-26 6-6 10 2v30z" fill="#2e3144"/><path d="M65 19c3-3 10-4 15-1v8c-4 2-11 1-15-2zM64 30c5-2 11-1 16 1v9c-5 1-11 0-16-3z" fill="#e8b020"/><path d="M36 6l2 3 3-1-2 3 2 3-3-1-2 3v-3l-3-1 3-1z" fill="#d070f0"/><circle cx="10" cy="27.5" r="1.8" fill="#5cbf6c"/><circle cx="65" cy="7" r="2" fill="#f0c040"/></svg>
<svg class="a" style="left:408px;top:872px;" width="16" height="16" viewBox="0 0 16 16"><circle cx="8" cy="8" r="6.8" fill="none" stroke="#fff" stroke-width="1.8"/></svg>
<svg class="a" style="left:455px;top:872px;" width="17" height="16" viewBox="0 0 17 16"><path d="M1 .5h11M1 15.5h11M1.5 3h10v10h-10z" fill="none" stroke="#fff" stroke-width="1.2"/><rect x="14" y="3" width="2.2" height="2.5" fill="#fff"/><path d="M15 7v8.5" stroke="#fff" stroke-width="1.2"/></svg>
<svg class="a" style="left:556px;top:872px;" width="17" height="17" viewBox="0 0 17 17"><path d="M8.5 0C6 1.5 3 2 0 2v6c0 4.5 4 7.5 8.5 9 4.5-1.5 8.5-4.5 8.5-9V2c-3 0-6-.5-8.5-2z" fill="#fff"/><path d="M8.5 0v17M0 8h17" stroke="#243640" stroke-width="1.3"/></svg>
<svg class="a" style="left:601px;top:872px;" width="22" height="17" viewBox="0 0 22 17"><path d="M0 0h8l2 2h12v15H0z" fill="#f8c94a"/><path d="M0 3h22v14H0z" fill="#fcd669"/><rect x="6" y="9" width="11" height="8" fill="#2a78c9"/><rect x="9" y="12" width="5" height="5" fill="#fcd669"/></svg>
<div class="a" style="left:593px;top:898px;width:40px;height:2px;background:#76b9ed"></div>
<svg class="a" style="left:650px;top:868px;" width="24" height="24" viewBox="0 0 24 24"><g transform="scale(.5)"><circle cx="24" cy="24" r="24" fill="#eb0029"/><path d="M10.4 18.2L25.4 12 35.7 15V30.8L13.5 31.4z" fill="#fff"/><path d="M16.8 22v9M23.2 19.5v11.5M29.6 19.5v11" stroke="#eb0029" stroke-width="1.4"/><path d="M25 33.3L35.7 31.6v4.2L25 35.5z" fill="#fff"/></g></svg>
<svg class="a" style="left:699px;top:868px;" width="24" height="24" viewBox="0 0 24 24"><g transform="scale(0.5)"><circle cx="24" cy="24" r="24" fill="#5865f2"/>
<path d="M14 15c3-1.5 5.5-2 7-2l.6 1.2c1.6-.3 3.2-.3 4.8 0L27 13c1.5 0 4 .5 7 2 2.5 4 3.8 8.5 3.6 14-2.4 1.8-4.8 2.9-7 3.5l-1.5-2.5c1-.4 1.8-.8 2.6-1.3l-.6-.5c-4.8 2.2-10 2.2-14.8 0l-.6.5c.8.5 1.6.9 2.6 1.3L17.4 32.5c-2.2-.6-4.6-1.7-7-3.5-.2-5.5 1.1-10 3.6-14z" fill="#fff"/>
<ellipse cx="19.5" cy="24.5" rx="2.4" ry="2.7" fill="#5865f2"/><ellipse cx="28.5" cy="24.5" rx="2.4" ry="2.7" fill="#5865f2"/></g></svg>
<svg class="a" style="left:711px;top:880px;" width="14" height="14" viewBox="0 0 14 14"><circle cx="7" cy="7" r="7" fill="#e04a4a"/><circle cx="7" cy="7" r="2.8" fill="#fff"/></svg>
<div class="a" style="left:691px;top:898px;width:40px;height:2px;background:#76b9ed"></div>
<svg class="a" style="left:748px;top:868px;" width="24" height="24" viewBox="0 0 24 24"><g transform="scale(0.5)"><circle cx="24" cy="24" r="24" fill="#db4437"/>
<path d="M24 24L3.2 36A24 24 0 0 0 24 48z" fill="#0f9d58"/><path d="M24 24L3.2 36A24 24 0 0 1 3.2 12L13.6 30z" fill="#0f9d58"/>
<path d="M24 24H44.8A24 24 0 0 1 24 48z" fill="#ffcd40"/><path d="M24 24L44.8 12A24 24 0 0 1 44.8 36 24 24 0 0 1 24 48z" fill="#fbbc05"/>
<path d="M24 12h20.8A24 24 0 0 0 3.2 12L13.6 30A12 12 0 0 1 24 12z" fill="#ea4335"/>
<path d="M13.6 30L3.2 12A24 24 0 0 0 24 48L34.4 30z" fill="#34a853"/>
<path d="M34.4 30L24 48A24 24 0 0 0 44.8 12H24A12 12 0 0 1 34.4 30z" fill="#fbbc05"/>
<circle cx="24" cy="23.5" r="12" fill="#fff"/><circle cx="24" cy="23.5" r="9.4" fill="#3b73db"/></g></svg>
<div class="a" style="left:740px;top:898px;width:40px;height:2px;background:#76b9ed"></div>
<div class="a" style="left:785px;top:860px;width:49px;height:40px;background:#4a5660"></div>
<svg class="a" style="left:796px;top:870px;" width="24" height="22" viewBox="0 0 24 22"><rect x="5.5" y="2.5" width="17" height="13" fill="#cfe3ee" stroke="#aab8c2"/><path d="M7 11l3-1 2-5 2 6 2-2 2 1 3-1" fill="none" stroke="#3a7bc0" stroke-width="1.1"/><rect x="0.5" y="6" width="5" height="11" fill="#c8d2d8"/><ellipse cx="14" cy="19" rx="5" ry="1.8" fill="#d4dade"/><rect x="12" y="15.5" width="4" height="3" fill="#bcc5cc"/></svg>
<div class="a" style="left:785px;top:898px;width:49px;height:2px;background:#76b9ed"></div>
<svg class="a" style="left:846px;top:869px;" width="24" height="22" viewBox="0 0 24 22"><defs><linearGradient id="np" x1="0" y1="1" x2="1" y2="0"><stop offset="0" stop-color="#1f7f96"/><stop offset=".6" stop-color="#8fd0e0"/><stop offset="1" stop-color="#e0f4f8"/></linearGradient></defs><path d="M20 2.8L22.5 4.5 22 17.5 17.4 20z" fill="#f2efe6"/><path d="M.2 16L7 .7 20 2.8 17.4 20z" fill="url(#np)"/><path d="M7 .7L20 2.8" stroke="#eef" stroke-width=".8"/></svg>
<div class="a" style="left:839px;top:898px;width:40px;height:2px;background:#76b9ed"></div>
<svg class="a" style="left:1331px;top:872px;" width="25" height="16" viewBox="0 0 25 16"><rect x=".8" y=".8" width="21" height="14.4" rx="1" fill="none" stroke="#fff" stroke-width="1.4"/><path d="M22 4h2.2v11.2" fill="none" stroke="#fff" stroke-width="1.2"/><rect x="4" y="6" width="6" height="5" fill="none" stroke="#fff" stroke-width="1.3"/><path d="M12 6h7M12 8.5h7M12 11h7M4 3.5h15" stroke="#fff" stroke-width="1.1"/></svg>
<svg class="a" style="left:1381px;top:876px;" width="12" height="7" viewBox="0 0 12 7"><path d="M.7 6.5L6 1.2l5.3 5.3" fill="none" stroke="#fff" stroke-width="1.2"/></svg>
<svg class="a" style="left:1403px;top:873px;" width="17" height="15" viewBox="0 0 17 15"><rect x="4.5" y="2.5" width="12" height="8" fill="none" stroke="#fff"/><path d="M10.5 10.5v3M7 14.5h7M.5.5h3v3h-3zM2 3.5v11M.5 14.5h3" fill="none" stroke="#fff"/></svg>
<svg class="a" style="left:1427px;top:874px;" width="17" height="14" viewBox="0 0 17 14"><path d="M1 4.5h3L8 1v12L4 9.5H1z" fill="none" stroke="#fff"/><path d="M10.5 4.5q1.5 2.5 0 5M12.5 2.8q2.8 4.2 0 8.4M14.5 1q4 6 0 12" fill="none" stroke="#fff"/></svg>
<div class="a" style="left:1444.5px;width:40px;text-align:center;top:871.5px;height:17px;line-height:17px;font-size:11px;color:#fff;">ENG</div>
<div class="a" style="left:1485.0px;width:60px;text-align:center;top:861.5px;height:18px;line-height:18px;font-size:11.5px;color:#fff;">5:55</div>
<div class="a" style="left:1475.5px;width:80px;text-align:center;top:879.5px;height:18px;line-height:18px;font-size:11.4px;color:#fff;">14/10/2565</div>
<svg class="a" style="left:1559px;top:873px;" width="26" height="22" viewBox="0 0 26 22"><path d="M.8 .8h14.4v11.2h-6l-4 3.6v-3.6H.8z" fill="#fff"/><path d="M3.5 4h9M3.5 6.5h9M3.5 9h6" stroke="#1a2440" stroke-width="1"/><circle cx="16" cy="13" r="7.5" fill="#2b2f3a" stroke="#9aa3b0" stroke-width="1"/><text x="16" y="17" font-size="11" fill="#fff" text-anchor="middle" font-family="Liberation Sans">1</text></svg>
<div class="a" style="left:1595px;top:860px;width:1px;height:40px;background:#5a6478"></div>
</body></html>
